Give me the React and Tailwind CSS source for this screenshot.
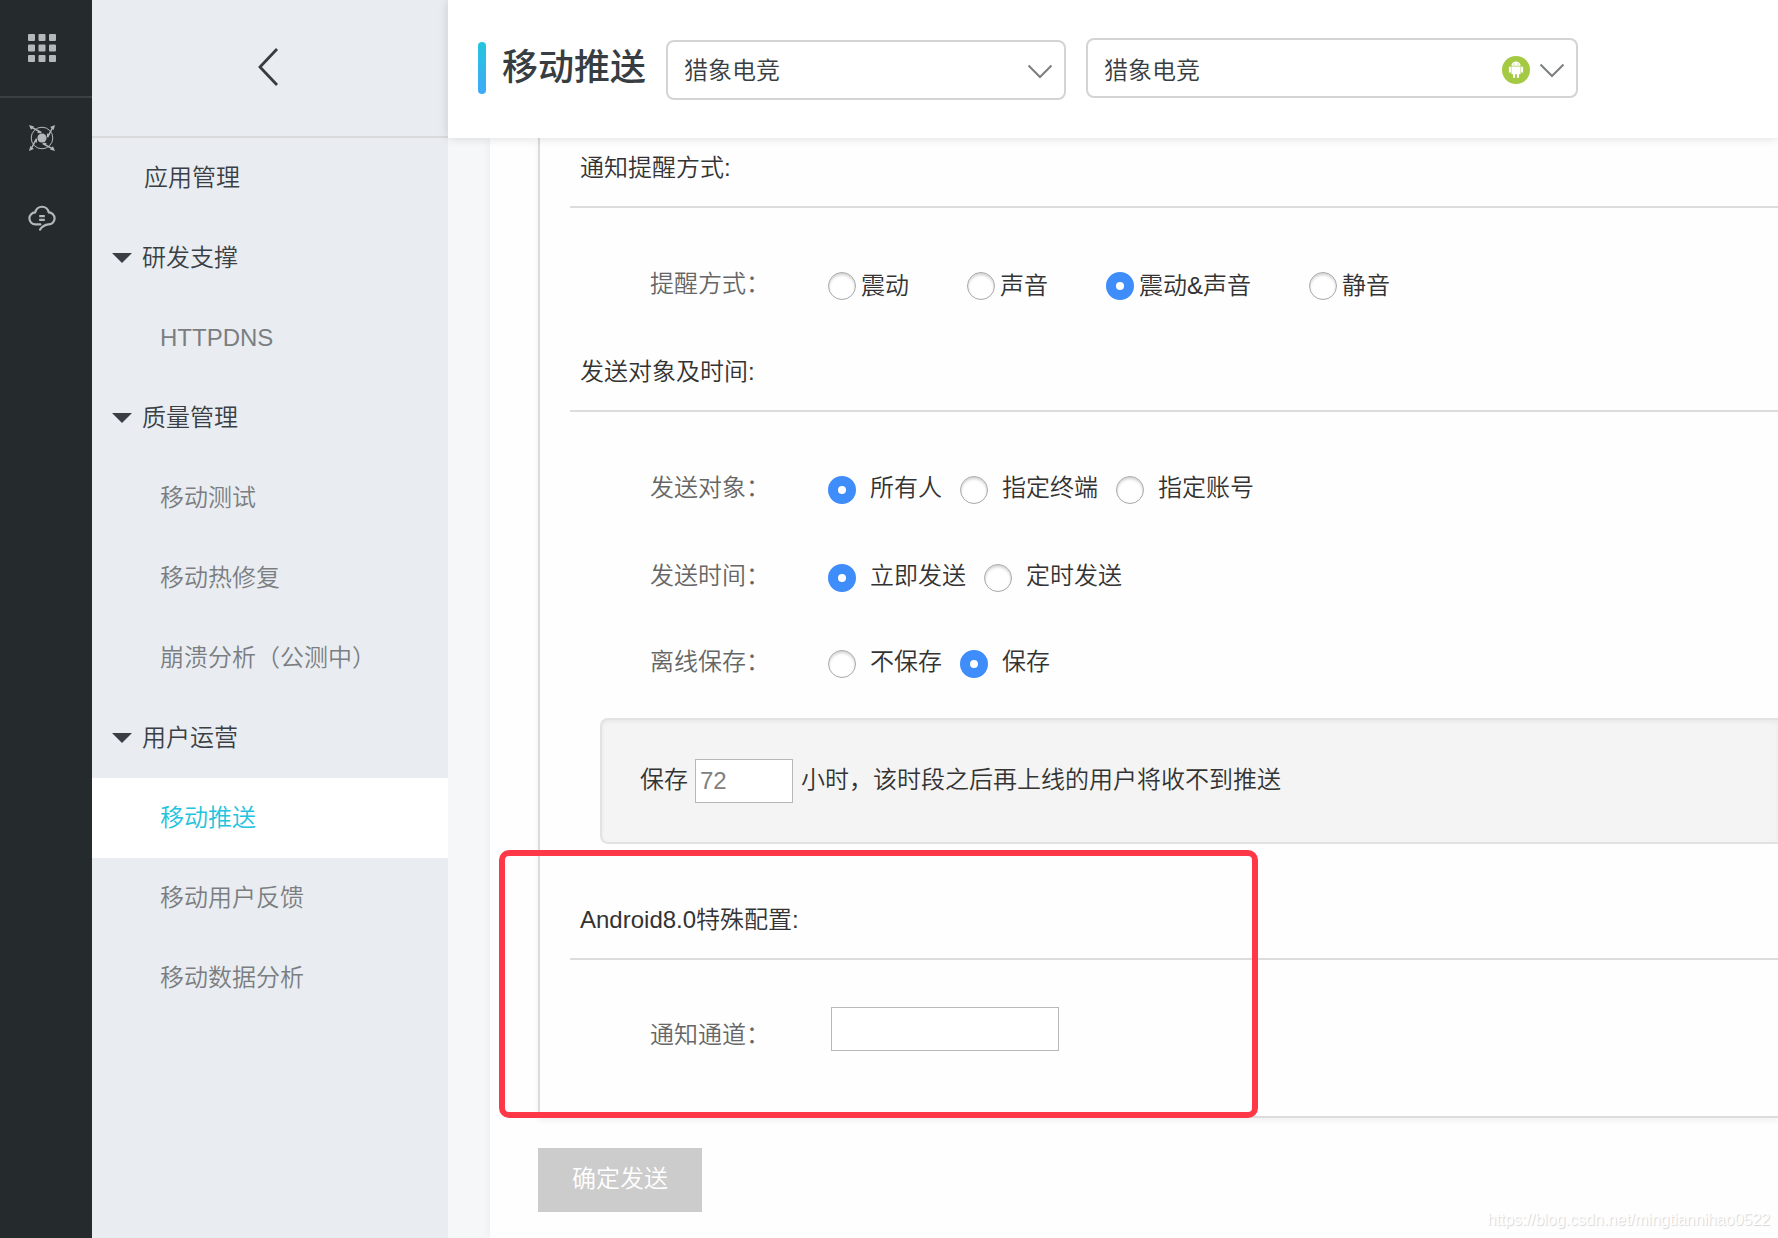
import React from "react";

const NAV = [
  { text: "应用管理", kind: "top" },
  { text: "研发支撑", kind: "group" },
  { text: "HTTPDNS", kind: "item" },
  { text: "质量管理", kind: "group" },
  { text: "移动测试", kind: "item" },
  { text: "移动热修复", kind: "item" },
  { text: "崩溃分析（公测中）", kind: "item" },
  { text: "用户运营", kind: "group" },
  { text: "移动推送", kind: "item", active: true },
  { text: "移动用户反馈", kind: "item" },
  { text: "移动数据分析", kind: "item" },
];

function GridIcon() {
  const cells = [0, 10.5, 21];
  return (
    <svg width="28" height="28" viewBox="0 0 28 28" fill="#b5b8ba" aria-hidden="true">
      {cells.map((y) =>
        cells.map((x) => <rect key={x + "-" + y} x={x} y={y} width="7" height="7" rx="1" />)
      )}
    </svg>
  );
}

function OrbitIcon() {
  return (
    <svg width="26" height="26" viewBox="0 0 26 26" fill="none" stroke="#b5b8ba" aria-hidden="true">
      <circle cx="13" cy="13" r="4.6" fill="#b5b8ba" stroke="none" />
      <circle cx="13" cy="13" r="10.8" strokeWidth="1" />
      {[0, 90, 180, 270].map((a) => (
        <g key={a} transform={"rotate(" + a + " 13 13)"}>
          <path d="M0 0 L5 1.4 L2 4.8 Z" fill="#b5b8ba" stroke="none" />
          <path d="M2 2 L12.2 7.4 L8.6 7.2" strokeWidth="1.5" />
        </g>
      ))}
    </svg>
  );
}

function CloudIcon() {
  return (
    <svg width="28" height="28" viewBox="0 0 28 28" fill="none" stroke="#b5b8ba" strokeWidth="2.2" strokeLinecap="round" strokeLinejoin="round" aria-hidden="true">
      <path d="M12.4 20.4 H7.5 A6 6 0 0 1 7.3 8.4 A6.8 6.8 0 0 1 20.7 8.4 A6 6 0 0 1 20.5 20.4 C16 20.8 14 22.6 12 25.6" />
      <path d="M11.2 12.2 h5.6 M11.2 15.9 h5.6" strokeLinecap="butt" />
    </svg>
  );
}

function Chevron() {
  return (
    <svg width="26" height="16" viewBox="0 0 26 16" fill="none" stroke="#7b7f82" strokeWidth="2" aria-hidden="true">
      <path d="M1.5 2.5 L13 14 L24.5 2.5" />
    </svg>
  );
}

function AndroidIcon() {
  return (
    <svg width="28" height="28" viewBox="0 0 28 28" aria-hidden="true">
      <circle cx="14" cy="14" r="14" fill="#a4c943" />
      <g fill="#fff">
        <path d="M9.4 9.8 A4.6 4.4 0 0 1 18.6 9.8 Z" />
        <path d="M9.4 10.5 H18.6 V17.2 A1 1 0 0 1 17.6 18.2 H10.4 A1 1 0 0 1 9.4 17.2 Z" />
        <rect x="6.9" y="10.4" width="2" height="6.4" rx="1" />
        <rect x="19.1" y="10.4" width="2" height="6.4" rx="1" />
        <rect x="11" y="17" width="2.1" height="5" rx="1" />
        <rect x="14.9" y="17" width="2.1" height="5" rx="1" />
      </g>
      <g fill="#a4c943">
        <circle cx="12" cy="8" r="0.6" />
        <circle cx="16" cy="8" r="0.6" />
      </g>
    </svg>
  );
}

function Radio({ name, text, checked, wide }) {
  return (
    <label className={wide ? "flex items-center gap-[5px]" : "flex items-center gap-[14px]"}>
      <input
        type="radio"
        name={name}
        defaultChecked={checked}
        className="h-7 w-7 shrink-0 appearance-none rounded-full border border-[#a8a8a8] bg-white shadow-[inset_0_2px_3px_rgba(0,0,0,0.18)] checked:border-[10px] checked:border-[#3f8cfb] checked:shadow-none"
      />
      <span className={wide ? "" : "-mt-1"}>{text}</span>
    </label>
  );
}

function Row({ label, children, className = "" }) {
  return (
    <div role="group" aria-label={label} className={"flex h-7 items-center " + className}>
      <span className="-mt-1 w-[178px] shrink-0 text-[#666]">{label}：</span>
      {children}
    </div>
  );
}

function SectionTitle({ children }) {
  return <h2 className="ml-[30px] border-b-2 border-[#dcdcdc] pt-0.5 pb-[22px] pl-[10px] leading-8 font-[350] text-[#333]">{children}</h2>;
}

export default function App() {
  return (
    <div className="flex min-h-screen overflow-hidden bg-[#f6f7f9] font-['Liberation_Sans','Noto_Sans_CJK_SC',sans-serif] text-2xl leading-8 font-[350] text-[#333]">
      <div className="flex w-[92px] shrink-0 flex-col items-center bg-[#252a2d]">
        <button type="button" aria-label="全部产品" className="flex h-[98px] w-full items-center border-b-2 border-[#3b4143] pl-7">
          <GridIcon />
        </button>
        <button type="button" aria-label="移动平台" className="flex h-20 w-full items-center pl-[29px]">
          <OrbitIcon />
        </button>
        <button type="button" aria-label="云服务" className="flex h-20 w-full items-center pl-7">
          <CloudIcon />
        </button>
      </div>

      <aside className="w-[356px] shrink-0 bg-[#e9edf2]">
        <button type="button" aria-label="返回" className="flex h-[138px] w-full items-center justify-center border-b-2 border-[#d9dadc] pr-1 pb-0.5">
          <svg width="22" height="40" viewBox="0 0 22 40" fill="none" stroke="#383c42" strokeWidth="2.8" aria-hidden="true">
            <path d="M20 2 L3 20 L20 38" />
          </svg>
        </button>
        <nav>
          {NAV.map((n) => (
            <a
              key={n.text}
              href="#"
              className={
                "flex h-20 items-center pb-px " +
                (n.kind === "top" ? "pl-[52px] text-[#3a3f45]" : n.kind === "group" ? "pl-5 text-[#3a3f45]" : n.active ? "bg-white pl-[68px] text-[#23c3dd]" : "pl-[68px] text-[#7b7e81]")
              }
            >
              {n.kind === "group" && (
                <svg width="20" height="10" viewBox="0 0 20 10" fill="#3a3f45" className="mr-[10px]" aria-hidden="true">
                  <path d="M0 0 H20 L10 10 Z" />
                </svg>
              )}
              {n.text}
            </a>
          ))}
        </nav>
      </aside>

      <div className="flex min-w-0 grow flex-col">
        <header className="z-10 flex h-[138px] shrink-0 items-start bg-white pl-[30px] shadow-[0_0_10px_rgba(0,0,0,0.14)]">
          <div className="mt-[42px] h-[52px] w-2 shrink-0 rounded-full bg-linear-to-b from-[#22c5dd] to-[#3fa9f8]" />
          <h1 className="mt-[42px] ml-4 shrink-0 text-4xl leading-[52px] font-medium text-[#373d41]">移动推送</h1>
          <button type="button" className="mt-10 ml-5 flex h-[60px] w-[400px] items-center justify-between rounded-lg border-2 border-[#d3d4d5] pt-0.5 pr-[11px] pl-4 text-[#373d41]">
            猎象电竞
            <Chevron />
          </button>
          <button type="button" className="mt-[38px] ml-5 flex h-[60px] w-[492px] items-center rounded-lg border-2 border-[#d3d4d5] pt-1 pr-[11px] pl-4 text-[#373d41]">
            <span className="mt-0.5 mr-auto">猎象电竞</span>
            <AndroidIcon />
            <span className="ml-[9px]">
              <Chevron />
            </span>
          </button>
        </header>

        <main className="ml-[42px] grow bg-[#fefefe] pl-12 shadow-[0_0_10px_rgba(0,0,0,0.05)]">
          <form onSubmit={(e) => e.preventDefault()}>
            <div className="relative h-[980px] border-b-2 border-l-2 border-[#dcdcdc] pt-3 shadow-[0_3px_6px_rgba(0,0,0,0.05)]">
              <SectionTitle>通知提醒方式:</SectionTitle>
              <Row label="提醒方式" className="mt-16 pl-[110px]">
                <div className="flex gap-[58px]">
                  <Radio wide name="remind" text="震动" />
                  <Radio wide name="remind" text="声音" />
                  <Radio wide name="remind" text="震动&声音" checked />
                  <Radio wide name="remind" text="静音" />
                </div>
              </Row>

              <div className="mt-[54px]">
                <SectionTitle>发送对象及时间:</SectionTitle>
              </div>
              <Row label="发送对象" className="mt-16 pl-[110px]">
                <div className="flex gap-[18px]">
                  <Radio name="target" text="所有人" checked />
                  <Radio name="target" text="指定终端" />
                  <Radio name="target" text="指定账号" />
                </div>
              </Row>
              <Row label="发送时间" className="mt-[60px] pl-[110px]">
                <div className="flex gap-[18px]">
                  <Radio name="time" text="立即发送" checked />
                  <Radio name="time" text="定时发送" />
                </div>
              </Row>
              <Row label="离线保存" className="mt-[58px] pl-[110px]">
                <div className="flex gap-[18px]">
                  <Radio name="offline" text="不保存" />
                  <Radio name="offline" text="保存" checked />
                </div>
              </Row>

              <div className="mt-10 ml-[60px] flex h-[126px] items-center rounded-l-lg border-2 border-r-0 border-[#e2e2e2] bg-[#f4f4f4] pl-[38px] shadow-[inset_0_2px_4px_rgba(0,0,0,0.05)]">
                <label htmlFor="hours" className="-mt-0.5">保存</label>
                <input id="hours" type="text" defaultValue="72" className="mr-2 ml-[7px] h-11 w-[98px] border border-[#b8b8b8] bg-white px-1 font-normal text-[#808080]" />
                <span className="-mt-0.5">小时，该时段之后再上线的用户将收不到推送</span>
              </div>

              <div className="mt-[58px]">
                <SectionTitle>Android8.0特殊配置:</SectionTitle>
              </div>
              <div className="mt-[47px] flex h-11 items-center pl-[110px]">
                <label htmlFor="channel" className="mt-3 w-[181px] shrink-0 text-[#666]">
                  通知通道：
                </label>
                <input id="channel" type="text" className="h-11 w-[228px] border border-[#b8b8b8] bg-white px-1" />
              </div>

              <div className="pointer-events-none absolute -bottom-[2px] -left-[41px] h-[268px] w-[759px] rounded-[10px] border-6 border-[#ff3847]" />
            </div>

            <button type="submit" className="mt-[30px] mb-[26px] h-16 w-[164px] bg-[#ccc] pb-0.5 text-white">
              确定发送
            </button>
          </form>
        </main>
      </div>

      <div className="absolute right-2 bottom-1.5 text-base leading-6 font-normal text-white [text-shadow:1px_1px_1px_#d4d4d4]">
        https://blog.csdn.net/mingtiannihao0522
      </div>
    </div>
  );
}
